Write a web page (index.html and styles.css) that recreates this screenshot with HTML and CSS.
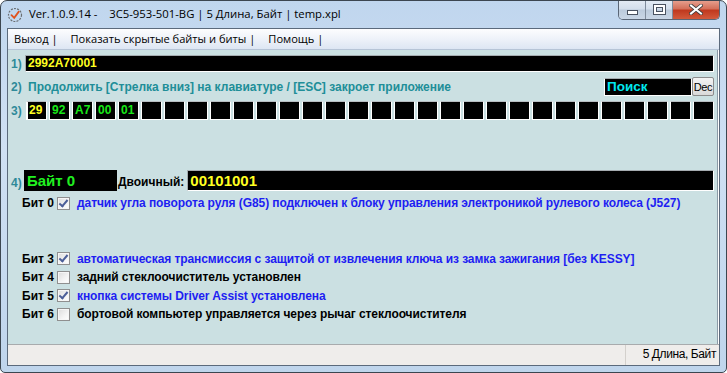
FILE: index.html
```html
<!DOCTYPE html>
<html lang="ru">

<head>
  <meta charset="UTF-8">
  <meta name="viewport" content="width=device-width, initial-scale=1.0">
  <title>Ver.1.0.9.14</title>
  <link rel="stylesheet" href="styles.css">
</head>

<body>
  <div class="window">
    <div class="titlebar">
      <svg class="app-icon" width="16" height="16" viewBox="0 0 16 16">
        <circle cx="8" cy="8" r="6.5" fill="none" stroke="#6b6f73" stroke-width="1.2" stroke-dasharray="2 1.2"/>
        <path d="M4.5 8.2 L7.2 10.8 L11.8 4.6" fill="none" stroke="#e0521f" stroke-width="1.8" stroke-linecap="round"/>
      </svg>
      <span class="title">Ver.1.0.9.14 -&nbsp;&nbsp;&nbsp; 3C5-953-501-BG | 5 Длина, Байт | temp.xpl</span>
      <div class="caption">
        <div class="cbtn min"><span></span></div>
        <div class="cbtn max"><span></span></div>
        <div class="cbtn close">
          <svg width="14" height="11" viewBox="0 0 14 11">
            <path d="M2 1.5 L12 9.5 M12 1.5 L2 9.5" stroke="#3d3d3d" stroke-width="3.6" stroke-linecap="square"/>
            <path d="M2 1.5 L12 9.5 M12 1.5 L2 9.5" stroke="#ffffff" stroke-width="2" stroke-linecap="square"/>
          </svg>
        </div>
      </div>
    </div>

    <div class="client">
      <div class="menubar">
        <span class="menu-item">Выход |</span>
        <span class="menu-item">Показать скрытые байты и биты |</span>
        <span class="menu-item">Помощь |</span>
      </div>

      <div class="content">
        <div class="row row-1">
          <span class="num">1)</span>
          <div class="field field-code">2992A70001</div>
        </div>

        <div class="row row-2">
          <span class="num">2)</span>
          <span class="hint">Продолжить [Стрелка вниз] на клавиатуре / [ESC] закроет приложение</span>
          <div class="search">Поиск</div>
          <button class="dec">Dec</button>
        </div>

        <div class="row row-3">
          <span class="num">3)</span>
          <div class="cells" id="cells"></div>
        </div>

        <div class="row row-4">
          <span class="num num-low">4)</span>
          <div class="byte-name">Байт 0</div>
          <span class="bin-label">Двоичный:</span>
          <div class="field field-bin">00101001</div>
        </div>

        <div class="bits">
          <div class="bit">
            <span class="bit-name">Бит 0</span>
            <span class="check checked"></span>
            <span class="bit-text on">датчик угла поворота руля (G85) подключен к блоку управления электроникой рулевого колеса (J527)</span>
          </div>
          <div class="bit hidden">
            <span class="bit-name">Бит 1</span>
            <span class="check"></span>
          </div>
          <div class="bit hidden">
            <span class="bit-name">Бит 2</span>
            <span class="check"></span>
          </div>
          <div class="bit">
            <span class="bit-name">Бит 3</span>
            <span class="check checked"></span>
            <span class="bit-text on">автоматическая трансмиссия с защитой от извлечения ключа из замка зажигания [без KESSY]</span>
          </div>
          <div class="bit">
            <span class="bit-name">Бит 4</span>
            <span class="check"></span>
            <span class="bit-text">задний стеклоочиститель установлен</span>
          </div>
          <div class="bit">
            <span class="bit-name">Бит 5</span>
            <span class="check checked"></span>
            <span class="bit-text on">кнопка системы Driver Assist установлена</span>
          </div>
          <div class="bit">
            <span class="bit-name">Бит 6</span>
            <span class="check"></span>
            <span class="bit-text">бортовой компьютер управляется через рычаг стеклоочистителя</span>
          </div>
        </div>
      </div>

      <div class="statusbar">
        <div class="sb-main"></div>
        <div class="sb-panel">5 Длина, Байт</div>
      </div>
    </div>
  </div>

  <script>
    // 30 byte cells, the first five are filled
    var bytes = ["29", "92", "A7", "00", "01"];
    var cells = document.getElementById("cells");
    for (var i = 0; i < 30; i++) {
      var cell = document.createElement("div");
      cell.className = "cell";
      if (i === 0) cell.className += " current";
      cell.textContent = bytes[i] || "";
      cells.appendChild(cell);
    }
  </script>
</body>

</html>
```

FILE: styles.css
```css
body {
  margin: 0;
  padding: 0;
  background: #ffffff;
}

.window {
  width: 727px;
  height: 373px;
  box-sizing: border-box;
  border: 1px solid #3c4650;
  border-radius: 7px 7px 5px 5px;
  background: linear-gradient(180deg, #c0d6ee 0%, #cfe0f3 40%, #bfd5ec 100%);
  display: flex;
  flex-direction: column;
  overflow: hidden;
  font-family: "Liberation Sans", Arial, sans-serif;
}

/* title bar */
.titlebar {
  height: 27px;
  display: flex;
  align-items: flex-start;
  flex-shrink: 0;
}

.app-icon {
  margin: 6px 0 0 6px;
}

.title {
  margin: 5px 0 0 6px;
  font-family: "Open Sans", "DejaVu Sans", sans-serif;
  font-size: 11.3px;
  line-height: 16px;
  color: #000;
  white-space: pre;
}

.caption {
  margin-left: auto;
  margin-right: 6px;
  display: flex;
  height: 19px;
  margin-top: -1px;
  border: 1px solid #5a6676;
  border-top: none;
  border-radius: 0 0 5px 5px;
  overflow: hidden;
}

.cbtn {
  height: 19px;
  display: flex;
  align-items: center;
  justify-content: center;
  background: linear-gradient(180deg, #e4ecf5 0%, #d3dfec 48%, #bccbdc 52%, #c9d6e5 100%);
}

.cbtn.min {
  width: 26px;
  border-right: 1px solid #7f8c9c;
}

.cbtn.min span {
  width: 9px;
  height: 3px;
  margin-top: 5px;
  background: #fff;
  border: 1px solid #4a5260;
}

.cbtn.max {
  width: 26px;
  border-right: 1px solid #7f8c9c;
}

.cbtn.max span {
  width: 7px;
  height: 5px;
  border: 2px solid #fff;
  outline: 1px solid #4a5260;
  box-shadow: inset 0 0 0 1px #4a5260;
}

.cbtn.close {
  width: 46px;
  background: linear-gradient(180deg, #e8a493 0%, #d4715b 45%, #c0391f 55%, #d25a3c 100%);
}

/* client area */
.client {
  flex: 1;
  margin: 0 6px 6px;
  border: 1px solid #5b6a7c;
  display: flex;
  flex-direction: column;
  background: #cbe0e2;
}

.menubar {
  height: 21px;
  box-sizing: border-box;
  padding: 2px 0 0 6px;
  background: linear-gradient(180deg, #fdfdfe 0%, #eef2f9 50%, #dde6f3 100%);
  border-bottom: 1px solid #b6c4d6;
  font-family: "Open Sans", "DejaVu Sans", sans-serif;
  font-size: 11.1px;
  display: flex;
  gap: 13px;
}

.menu-item {
  color: #000;
}

.content {
  flex: 1;
  padding: 5px 4px 0 3px;
  border-right: 1px solid #ffffff;
  box-shadow: inset -1px 0 0 #8b9aa6;
  font-weight: bold;
  font-size: 12px;
}

.row {
  display: flex;
  align-items: center;
}

.num {
  width: 14px;
  flex-shrink: 0;
  color: #2f8a99;
  font-size: 12px;
}

.num-low {
  align-self: flex-end;
  margin-bottom: 1px;
}

.field {
  box-sizing: border-box;
  background: #000;
  border: 1px solid #ffffff;
  border-top-color: #a5acb0;
  border-left-color: #a5acb0;
  color: #ffff20;
  padding-left: 2px;
}

.row-1 .field {
  flex: 1;
  height: 17px;
  line-height: 15px;
  font-size: 12px;
}

.row-2 {
  margin-top: 5px;
  height: 19px;
}

.hint {
  margin-left: 3px;
  color: #208e98;
  font-size: 12px;
}

.search {
  margin-left: auto;
  width: 88px;
  height: 18px;
  box-sizing: border-box;
  background: #000;
  border: 1px solid #ffffff;
  border-top-color: #a5acb0;
  color: #00e8f0;
  font-size: 13.5px;
  line-height: 16px;
  padding-left: 2px;
}

.dec {
  width: 22px;
  height: 19px;
  padding: 0;
  margin: 0;
  border: 1px solid #8c8c8c;
  border-radius: 2px;
  background: linear-gradient(180deg, #f3f3f3 0%, #e6e6e6 50%, #d9d9d9 100%);
  font-family: "Liberation Sans", Arial, sans-serif;
  font-size: 11px;
  letter-spacing: -0.3px;
  color: #000;
}

.row-3 {
  margin-top: 5px;
}

.cells {
  flex: 1;
  margin-left: 1px;
  display: grid;
  grid-template-columns: repeat(30, 1fr);
  gap: 2px;
}

.cell {
  height: 19px;
  box-sizing: border-box;
  background: #000;
  border: 1px solid #ffffff;
  border-top-color: #b8bec2;
  color: #18e818;
  font-size: 12px;
  line-height: 17px;
  padding-left: 2px;
}

.cell.current {
  color: #ffff20;
  box-shadow: inset 1px 0 0 #ffffff;
}

.row-4 {
  margin-top: 50px;
  height: 21px;
}

.byte-name {
  width: 93px;
  margin-left: -1px;
  height: 21px;
  background: #000;
  color: #20f020;
  font-size: 15px;
  line-height: 21px;
  padding-left: 3px;
  box-sizing: border-box;
}

.bin-label {
  margin: 0 3px 0 1px;
  align-self: flex-end;
  color: #000;
  font-size: 12px;
  margin-bottom: 2px;
}

.row-4 .field {
  flex: 1;
  height: 21px;
  font-size: 15px;
  line-height: 19px;
}

/* bits */
.bits {
  margin-top: 3px;
  padding-left: 11px;
}

.bit {
  height: 18.5px;
  display: flex;
  align-items: center;
}

.bit.hidden {
  visibility: hidden;
}

.bit-name {
  width: 35px;
  color: #000;
}

.check {
  width: 13px;
  height: 13px;
  box-sizing: border-box;
  border: 1px solid #8f8f8f;
  background: linear-gradient(135deg, #dcdcdc 0%, #f4f4f4 60%, #ffffff 100%);
  box-shadow: inset 0 0 0 1px #f6f6f6;
  position: relative;
}

.check.checked::after {
  content: "";
  position: absolute;
  left: 3px;
  top: 0px;
  width: 3px;
  height: 7px;
  border: solid #4c5f98;
  border-width: 0 2px 2px 0;
  transform: rotate(40deg);
}

.bit-text {
  margin-left: 7px;
  color: #000;
  white-space: nowrap;
  letter-spacing: -0.08px;
}

.bit-text.on {
  color: #1e1ef2;
}

/* status bar */
.statusbar {
  height: 21px;
  box-sizing: border-box;
  border-top: 1px solid #a8abad;
  background: #efedeb;
  display: flex;
  font-family: "Liberation Sans", Arial, sans-serif;
  font-size: 12px;
}

.sb-main {
  flex: 1;
}

.sb-panel {
  width: 90px;
  border-left: 1px solid #d3d0cc;
  text-align: right;
  padding-right: 3px;
  line-height: 19px;
  letter-spacing: -0.4px;
}
```
